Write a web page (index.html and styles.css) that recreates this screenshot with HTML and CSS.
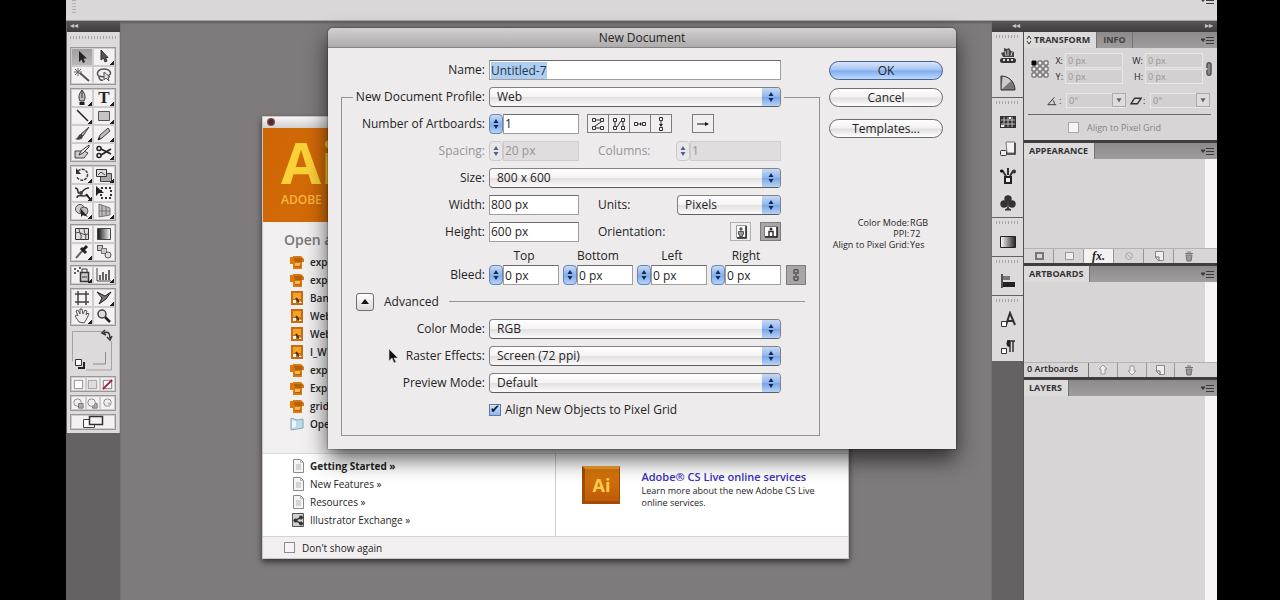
FILE: index.html
```html
<!DOCTYPE html>
<html lang="en">
<head>
<meta charset="utf-8">
<title>New Document</title>
<link rel="stylesheet" href="styles.css">
</head>
<body>
<svg class="defs" aria-hidden="true">
  <symbol id="updown" viewBox="0 0 10 14"><path d="M5 2 7.500 6h-5zM5 12 2.500 8h5z" fill="#132a5c"/></symbol>
  <symbol id="ai-file" viewBox="0 0 14 14"><path d="M0 2h3V1h8l3 3v3h-2v7H3V9H0z" fill="#d9790f"/><path d="M4 4h8M5 6h7M5 11h6" stroke="#8f4607"/><path d="M5 8h5v3H5z" fill="#ffb64c"/></symbol>
  <symbol id="web-file" viewBox="0 0 14 14"><path d="M1 0h12v14H1z" fill="#c96c0c"/><path d="M3 2h8v6H3z" fill="#f3a22e"/><path d="M3 9h3v3H3zM9 9l3 3H9z" fill="#fff"/><path d="M6 7l3 4" stroke="#5a2c04" stroke-width="2"/></symbol>
  <symbol id="doc" viewBox="0 0 14 16"><path d="M2.500 1.500h7l3 3v10h-10z" fill="#f4f4f2" stroke="#8b8989"/><path d="M9.500 1.500v3h3M5 7h5M5 9h5M5 11h5" stroke="#b5b3b3" fill="none"/></symbol>
  <symbol id="menu" viewBox="0 0 14 9"><path d="M0 3h4L2 5.500zM5 1.500h8M5 4.500h8M5 7.500h8" stroke="#3b3939" fill="#3b3939" stroke-width="1"/></symbol>
  <symbol id="new" viewBox="0 0 14 12"><path d="M3.500 1.500h8v9h-5l-3-3z" fill="#eee" stroke="#8b8888"/><path d="M3 7h4v4" stroke="#6b6969" fill="none"/></symbol>
  <symbol id="trash" viewBox="0 0 14 12"><path d="M3 3.500h8M5 2h4M4 5h6l-1 6H5z" fill="#999" stroke="#747272"/></symbol>
</svg>

<div class="app">
  <header class="topbar"><span class="topgrip"></span><svg class="menu" viewBox="0 0 14 9"><use href="#menu"/></svg></header>

  <div class="workspace">
    <aside class="tools">
      <div class="strip">◂◂</div>
      <div class="toolbox">
        <span class="grip"></span>
        <div class="group">
          <button class="tool active" aria-label="Selection"><svg viewBox="0 0 20 16"><path d="M7 2v11l2.500-2.500L11 14l2-1-1.500-3.500H15z" fill="#222"/></svg></button>
          <button class="tool more" aria-label="Direct selection"><svg viewBox="0 0 20 16"><path d="M7 1v10l2.500-2L11 13l2-1-1.500-3.500H14z" fill="#555" stroke="#333"/></svg></button>
          <button class="tool" aria-label="Magic wand"><svg viewBox="0 0 20 16"><path d="M8 6l9 8" stroke="#555" stroke-width="2"/><path d="M6 1v8M2 5h8M3 2l6 6M9 2 3 8" stroke="#666"/></svg></button>
          <button class="tool" aria-label="Lasso"><svg viewBox="0 0 20 16"><path d="M6 10C1 7 4 2 10 2s9 5 4 7-9-1-9 1 2 4 4 3" fill="none" stroke="#555" stroke-width="1.500"/><path d="M10 5v8l2-2 3 3-1-4h2z" fill="#ddd" stroke="#555"/></svg></button>
        </div>
        <div class="group">
          <button class="tool more" aria-label="Pen"><svg viewBox="0 0 20 16"><path d="M10 0C7 4 6 7 8 11h4c2-4 1-7-2-11z" fill="#bbb" stroke="#333"/><path d="M10 1v7" stroke="#333"/><path d="M7.500 13.500h5" stroke="#222" stroke-width="3"/></svg></button>
          <button class="tool more letter" aria-label="Type">T</button>
          <button class="tool more" aria-label="Line"><svg viewBox="0 0 20 16"><path d="M5 2l11 11" stroke="#222" stroke-width="1.500"/></svg></button>
          <button class="tool more" aria-label="Rectangle"><svg viewBox="0 0 20 16"><path d="M4.500 3.500h11v9h-11z" fill="#c6c4c4" stroke="#555"/></svg></button>
          <button class="tool more" aria-label="Brush"><svg viewBox="0 0 20 16"><path d="M17 1 9 8l2 2z" fill="#aaa" stroke="#444"/><path d="M9 8c-3 0-2 4-6 5 4 2 8 0 8-3z" fill="#444"/></svg></button>
          <button class="tool more" aria-label="Pencil"><svg viewBox="0 0 20 16"><path d="M4 14l2-5 8-7 2 3-8 7z" fill="#bbb" stroke="#444"/><path d="M4 14l1-3 2 2z" fill="#222"/></svg></button>
          <button class="tool" aria-label="Blob brush"><svg viewBox="0 0 20 16"><path d="M3 7h9l4 2-4 5H3z" fill="#ccc" stroke="#444"/><path d="M17 1 9 7l-2 4 4-2 6-6z" fill="#eee" stroke="#333"/></svg></button>
          <button class="tool more" aria-label="Scissors"><svg viewBox="0 0 20 16"><path d="M7 5l10 5M7 11l10-6" stroke="#222" stroke-width="1.500"/><circle cx="5" cy="4.500" r="2" fill="none" stroke="#222" stroke-width="1.500"/><circle cx="5" cy="11.500" r="2" fill="none" stroke="#222" stroke-width="1.500"/></svg></button>
        </div>
        <div class="group">
          <button class="tool more" aria-label="Rotate"><svg viewBox="0 0 20 16"><path d="M6 4a5.500 5.500 0 1 1-1 6" fill="none" stroke="#444" stroke-width="1.500" stroke-dasharray="3 1"/><path d="M4 1v6h5z" fill="#333"/></svg></button>
          <button class="tool more" aria-label="Scale"><svg viewBox="0 0 20 16"><path d="M6.500 6.500h11v8h-11z" fill="#aaa" stroke="#444"/><path d="M2.500 2.500h10v7h-10z" fill="#ddd" stroke="#333"/><path d="M4 8l3-3 4 3" stroke="#444" fill="none"/></svg></button>
          <button class="tool more" aria-label="Width"><svg viewBox="0 0 20 16"><path d="M3 3c5 0 1 6 5 5s4-6 9-5M5 13c0-5 7 0 11-3" fill="none" stroke="#333" stroke-width="1.500"/><circle cx="9" cy="8" r="2" fill="#444"/><path d="M14 9l4 5" stroke="#222" stroke-width="2"/></svg></button>
          <button class="tool" aria-label="Free transform"><svg viewBox="0 0 20 16"><path d="M7 3h10v10H7z" fill="none" stroke="#333" stroke-width="2" stroke-dasharray="2 2"/><path d="M2 1v10l3-3h5z" fill="#222"/></svg></button>
          <button class="tool more" aria-label="Shape builder"><svg viewBox="0 0 20 16"><circle cx="8" cy="6" r="4.500" fill="#ccc" stroke="#555"/><circle cx="12" cy="8" r="4" fill="#bbb" stroke="#555"/><path d="M9 6v8l2-2 5 2z" fill="#222"/></svg></button>
          <button class="tool more" aria-label="Perspective grid"><svg viewBox="0 0 20 16"><path d="M5 1v13l11-2V5z" fill="#bbb" stroke="#777"/><path d="M8 2v11M12 4v9M5 8h11" stroke="#777"/></svg></button>
        </div>
        <div class="group">
          <button class="tool" aria-label="Mesh"><svg viewBox="0 0 20 16"><path d="M3.500 2.500h13v11h-13z" fill="#ddd" stroke="#333"/><path d="M3 8c4-5 9 4 14-1M8 2c-3 4 4 7 0 12M13 2c-3 4 3 7 0 12" stroke="#444" fill="none"/></svg></button>
          <button class="tool" aria-label="Gradient"><svg viewBox="0 0 20 16"><defs><linearGradient id="g1"><stop stop-color="#111"/><stop offset="1" stop-color="#fff"/></linearGradient></defs><path d="M3.500 2.500h13v11h-13z" fill="url(#g1)" stroke="#444"/></svg></button>
          <button class="tool more" aria-label="Eyedropper"><svg viewBox="0 0 20 16"><path d="M4 14l7-8" stroke="#666" stroke-width="2"/><path d="M9 4l5 5M11 6l4-4" stroke="#222" stroke-width="3"/></svg></button>
          <button class="tool" aria-label="Blend"><svg viewBox="0 0 20 16"><rect x="3.500" y="1.500" width="5" height="5" fill="#ccc" stroke="#555"/><rect x="7.500" y="4.500" width="5" height="5" fill="#ccc" stroke="#777"/><circle cx="14" cy="11" r="3" fill="#ddd" stroke="#555"/></svg></button>
        </div>
        <div class="group">
          <button class="tool more" aria-label="Symbol sprayer"><svg viewBox="0 0 20 16"><path d="M8.500 5.500h8v9h-8z" fill="#ccc" stroke="#333" stroke-width="1.500"/><path d="M10 5V2h5v3M10 10h5" stroke="#333" fill="none"/><path d="M2 2h2M5 4h2M7 1h2M2 6h2" stroke="#333" stroke-width="1.500"/></svg></button>
          <button class="tool more" aria-label="Graph"><svg viewBox="0 0 20 16"><path d="M3 1v13h14" stroke="#444" fill="none"/><path d="M6 13V8M9 13V5M12 13V7M15 13V3" stroke="#666" stroke-width="2"/></svg></button>
        </div>
        <div class="group">
          <button class="tool" aria-label="Artboard"><svg viewBox="0 0 20 16"><path d="M6 1v14M14 1v14M3 4h14M3 12h14" stroke="#444" stroke-width="1.500"/></svg></button>
          <button class="tool more" aria-label="Slice"><svg viewBox="0 0 20 16"><path d="M3 2l8 4 6-4-5 7-7 5 3-6z" fill="#777" stroke="#222"/></svg></button>
          <button class="tool more" aria-label="Hand"><svg viewBox="0 0 20 16"><path d="M7 14 3 8l2-1 1 1-2-5 2-1 2 4V1h2l1 5 2-4 2 1-1 4 2-2 1 1-3 6-2 3z" fill="#eee" stroke="#555"/></svg></button>
          <button class="tool" aria-label="Zoom"><svg viewBox="0 0 20 16"><circle cx="8" cy="6" r="4" fill="#ddd" stroke="#444" stroke-width="1.500"/><path d="M11 9l5 5" stroke="#222" stroke-width="2.500"/></svg></button>
        </div>
        <div class="swatches"><svg viewBox="0 0 46 44"><path d="M2.500 2.500h32M2.500 2.500v30M41.500 12v29H16" fill="none" stroke="#a5a3a3"/><path d="M35.500 23v12H23" fill="none" stroke="#8d8b8b"/><path d="M34 4c4-2 6 0 6 5M37 8l3 3 2-4M35 1l-3 3 4 2" fill="none" stroke="#333" stroke-width="1.500"/><path d="M5.500 30.500h6v6h-6z" fill="#fff" stroke="#333"/><path d="M14 33v6H8" fill="none" stroke="#222" stroke-width="2"/></svg></div>
        <div class="group three">
          <button class="tool" aria-label="Color"><svg viewBox="0 0 14 14"><path d="M2.500 2.500h9v9h-9z" fill="#fff" stroke="#888"/></svg></button>
          <button class="tool" aria-label="Gradient fill"><svg viewBox="0 0 14 14"><path d="M2.500 2.500h9v9h-9z" fill="#ddd" stroke="#999"/></svg></button>
          <button class="tool" aria-label="None"><svg viewBox="0 0 14 14"><path d="M2.500 2.500h9v9h-9z" fill="#fff" stroke="#777"/><path d="M12 2 2 12" stroke="#b01736" stroke-width="2"/></svg></button>
        </div>
        <div class="group three">
          <button class="tool" aria-label="Draw normal"><svg viewBox="0 0 14 14"><circle cx="6" cy="6" r="4" fill="#eee" stroke="#888"/><path d="M7 7h5v5H7z" fill="#aaa" stroke="#777"/></svg></button>
          <button class="tool" aria-label="Draw behind"><svg viewBox="0 0 14 14"><path d="M7 7h5v5H7z" fill="#aaa" stroke="#777"/><circle cx="6" cy="6" r="4" fill="#eee" stroke="#888"/></svg></button>
          <button class="tool" aria-label="Draw inside"><svg viewBox="0 0 14 14"><circle cx="7" cy="6" r="4" fill="#eee" stroke="#888"/><path d="M7 6h4l-2 5z" fill="#bbb"/></svg></button>
        </div>
        <div class="group one"><button class="tool" aria-label="Screen mode"><svg viewBox="0 0 24 14"><path d="M2.500 4.500h11v8h-11z" fill="#fff" stroke="#444"/><path d="M8.500 1.500h13v8h-13z" fill="#f4f2f2" stroke="#333" stroke-width="1.500"/></svg></button></div>
      </div>
    </aside>

    <main class="stage">
      <section class="welcome" aria-label="Welcome">
        <div class="welcome-bar"><span class="close-dot"></span></div>
        <div class="banner"><div class="logo-text">Ai</div><div class="brand">ADOBE</div></div>
        <div class="recent">
          <h2>Open a</h2>
          <ul>
            <li><svg viewBox="0 0 14 14"><use href="#ai-file"/></svg>exp</li>
            <li><svg viewBox="0 0 14 14"><use href="#ai-file"/></svg>exp</li>
            <li><svg viewBox="0 0 14 14"><use href="#web-file"/></svg>Ban</li>
            <li><svg viewBox="0 0 14 14"><use href="#web-file"/></svg>Web</li>
            <li><svg viewBox="0 0 14 14"><use href="#web-file"/></svg>Web</li>
            <li><svg viewBox="0 0 14 14"><use href="#web-file"/></svg>I_W</li>
            <li><svg viewBox="0 0 14 14"><use href="#ai-file"/></svg>exp</li>
            <li><svg viewBox="0 0 14 14"><use href="#ai-file"/></svg>Exp</li>
            <li><svg viewBox="0 0 14 14"><use href="#ai-file"/></svg>grid</li>
            <li><svg viewBox="0 0 14 14"><path d="M1 1l6 2 6-1v9l-6 1-6 1z" fill="#bcdbe9" stroke="#86a9bc"/><path d="M2 3l4 1v6l-4 1z" fill="#eaf6fb"/></svg>Ope</li>
          </ul>
        </div>
        <div class="links">
          <ul>
            <li><svg viewBox="0 0 14 16"><use href="#doc"/></svg><a class="strong" href="#">Getting Started »</a></li>
            <li><svg viewBox="0 0 14 16"><use href="#doc"/></svg><a href="#">New Features »</a></li>
            <li><svg viewBox="0 0 14 16"><use href="#doc"/></svg><a href="#">Resources »</a></li>
            <li><svg viewBox="0 0 14 16"><path d="M1.500 1.500h11v13h-11z" fill="#d0cece" stroke="#555"/><path d="M11 5 4 8.500l7 3.500" fill="none" stroke="#444" stroke-width="1.500"/><circle cx="10" cy="5.500" r="2" fill="#333"/><circle cx="4.500" cy="8.500" r="2" fill="#333"/><circle cx="10" cy="11.500" r="2" fill="#333"/></svg><a href="#">Illustrator Exchange »</a></li>
          </ul>
          <div class="live">
            <div class="live-icon">Ai</div>
            <div><a class="live-title" href="#">Adobe® CS Live online services</a><p>Learn more about the new Adobe CS Live<br>online services.</p></div>
          </div>
        </div>
        <label class="again"><input type="checkbox">Don't show again</label>
      </section>

      <form class="dialog" aria-labelledby="title">
        <h1 id="title">New Document</h1>
        <div class="dialog-body">
          <div class="fields">
            <div class="row name-row"><label class="lab" for="name">Name:</label><div class="ctl"><input class="full" id="name" value="Untitled-7" autofocus></div></div>
            <fieldset>
              <legend><label class="lab" for="profile">New Document Profile:</label>
                <span class="pop"><select id="profile"><option>Web</option></select><svg viewBox="0 0 10 14"><use href="#updown"/></svg></span></legend>

              <div class="row"><label class="lab" for="boards">Number of Artboards:</label>
                <div class="ctl"><span class="step"><button type="button" aria-label="Step artboards"><svg viewBox="0 0 10 14"><use href="#updown"/></svg></button><input id="boards" value="1"></span>
                  <div class="arrange">
                    <button type="button" aria-label="Grid by row"><svg viewBox="0 0 16 16"><path d="M2.500 2.500h3v3h-3zM10.500 2.500h3v3h-3zM2.500 10.500h3v3h-3zM10.500 10.500h3v3h-3zM6 4h4M11 6l-6 4M6 12h4" fill="none" stroke="#333"/></svg></button>
                    <button type="button" aria-label="Grid by column"><svg viewBox="0 0 16 16"><path d="M2.500 2.500h3v3h-3zM10.500 2.500h3v3h-3zM2.500 10.500h3v3h-3zM10.500 10.500h3v3h-3zM4 6v4M6 11l4-6M12 6v4" fill="none" stroke="#333"/></svg></button>
                    <button type="button" aria-label="Arrange by row"><svg viewBox="0 0 16 16"><path d="M2.500 6.500h3v3h-3zM10.500 6.500h3v3h-3zM6 8h3" fill="none" stroke="#333"/><path d="M8 6l2 2-2 2z" fill="#222"/></svg></button>
                    <button type="button" aria-label="Arrange by column"><svg viewBox="0 0 16 16"><path d="M6.500 1.500h3v3h-3zM6.500 11.500h3v3h-3zM8 5v4" fill="none" stroke="#333"/><path d="M6 8h4l-2 3z" fill="#222"/></svg></button>
                  </div>
                  <button class="dir" type="button" aria-label="Layout direction"><svg viewBox="0 0 16 16"><path d="M2 8h9" stroke="#111"/><path d="M10 6l4 2-4 2z" fill="#111"/></svg></button>
                </div></div>

              <div class="row off"><label class="lab" for="spacing">Spacing:</label>
                <div class="ctl"><span class="step"><button type="button" disabled aria-label="Step spacing"><svg viewBox="0 0 10 14"><use href="#updown"/></svg></button><input id="spacing" value="20 px" disabled></span>
                  <label class="sub" for="cols">Columns:</label><span class="step end"><button type="button" disabled aria-label="Step columns"><svg viewBox="0 0 10 14"><use href="#updown"/></svg></button><input id="cols" value="1" disabled></span></div></div>

              <div class="row"><label class="lab" for="size">Size:</label><span class="pop"><select id="size"><option>800 x 600</option></select><svg viewBox="0 0 10 14"><use href="#updown"/></svg></span></div>

              <div class="row"><label class="lab" for="width">Width:</label>
                <div class="ctl"><input class="short" id="width" value="800 px"><label class="sub" for="units">Units:</label>
                  <span class="pop small end"><select id="units"><option>Pixels</option></select><svg viewBox="0 0 10 14"><use href="#updown"/></svg></span></div></div>

              <div class="row"><label class="lab" for="height">Height:</label>
                <div class="ctl"><input class="short" id="height" value="600 px"><span class="sub">Orientation:</span>
                  <div class="orient end">
                    <button type="button" aria-label="Portrait"><svg viewBox="0 0 16 16"><path d="M3.500 1.500h10v12h-10z" fill="#fff" stroke="#999"/><circle cx="8" cy="5" r="1.700" fill="#555"/><path d="M5.500 7.500h5v3h-1v2h-3v-2h-1z" fill="#999" stroke="#555"/><path d="M13 2v12H4" fill="none" stroke="#222" stroke-width="1.500"/></svg></button>
                    <button class="on" type="button" aria-label="Landscape"><svg viewBox="0 0 16 16"><path d="M1.500 2.500h13v10h-13z" fill="#fff" stroke="#777"/><circle cx="8" cy="5" r="1.500" fill="#333"/><path d="M6 12V7.500h4V12" fill="none" stroke="#333" stroke-width="1.500"/><path d="M14 3v10H2" fill="none" stroke="#222" stroke-width="1.500"/></svg></button>
                  </div></div></div>

              <div class="row bleed"><span class="lab">Bleed:</span>
                <div class="ctl">
                  <div class="side"><label for="b1">Top</label><span class="step"><button type="button" aria-label="Step top"><svg viewBox="0 0 10 14"><use href="#updown"/></svg></button><input id="b1" value="0 px"></span></div>
                  <div class="side"><label for="b2">Bottom</label><span class="step"><button type="button" aria-label="Step bottom"><svg viewBox="0 0 10 14"><use href="#updown"/></svg></button><input id="b2" value="0 px"></span></div>
                  <div class="side"><label for="b3">Left</label><span class="step"><button type="button" aria-label="Step left"><svg viewBox="0 0 10 14"><use href="#updown"/></svg></button><input id="b3" value="0 px"></span></div>
                  <div class="side"><label for="b4">Right</label><span class="step"><button type="button" aria-label="Step right"><svg viewBox="0 0 10 14"><use href="#updown"/></svg></button><input id="b4" value="0 px"></span></div>
                  <button class="link" type="button" aria-label="Link bleeds"><svg viewBox="0 0 16 16"><path d="M6 7V4c0-2 4-2 4 0v3M6 9v3c0 2 4 2 4 0V9M8 5v6" fill="none" stroke="#555" stroke-width="1.500"/></svg></button>
                </div></div>

              <div class="advanced"><button type="button" aria-label="Collapse advanced"><svg viewBox="0 0 16 16"><path d="M8 5l4 5H4z" fill="#111"/></svg></button><span>Advanced</span><hr></div>

              <div class="row"><label class="lab" for="mode">Color Mode:</label><span class="pop"><select id="mode"><option>RGB</option></select><svg viewBox="0 0 10 14"><use href="#updown"/></svg></span></div>
              <div class="row"><label class="lab" for="raster">Raster Effects:</label><span class="pop"><select id="raster"><option>Screen (72 ppi)</option></select><svg viewBox="0 0 10 14"><use href="#updown"/></svg></span></div>
              <div class="row"><label class="lab" for="preview">Preview Mode:</label><span class="pop"><select id="preview"><option>Default</option></select><svg viewBox="0 0 10 14"><use href="#updown"/></svg></span></div>
              <div class="row"><span class="lab"></span><label class="align"><input type="checkbox" checked>Align New Objects to Pixel Grid</label></div>
            </fieldset>
          </div>
          <div class="actions">
            <button class="btn primary" type="button">OK</button>
            <button class="btn" type="button">Cancel</button>
            <button class="btn templates" type="button">Templates...</button>
            <dl><dt>Color Mode:</dt><dd>RGB</dd><dt>PPI:</dt><dd>72</dd><dt>Align to Pixel Grid:</dt><dd>Yes</dd></dl>
          </div>
        </div>
      </form>
      <svg class="cursor" viewBox="0 0 10 16"><path d="M1 1v12l3-3 2 5 2-1-2-4h4z" fill="#111" stroke="#ddd" stroke-width=".6"/></svg>
    </main>

    <aside class="side-area">
      <div class="dock">
        <div class="strip right">◂◂</div>
        <div class="dock-group"><span class="grip"></span>
          <button aria-label="Color"><svg viewBox="0 0 18 18"><path d="M4 10 2 6l3-1V1l3 1 2-1 2 3 3 1v5z" fill="#444"/><path d="M6 4l1 5M9 3v6M13 5l-1 4" stroke="#ccc"/><rect x="1" y="11" width="16" height="5" rx="2.500" fill="#333"/><path d="M4 13h2M8 13h2M12 13h2" stroke="#ddd" stroke-width="2"/></svg></button>
          <button aria-label="Color guide"><svg viewBox="0 0 18 18"><path d="M2 16V2c8 0 14 6 14 14z" fill="#777"/><path d="M2 16 4 2c3 0 6 2 8 5z" fill="#ccc"/><path d="M2 16V2c8 0 14 6 14 14z" fill="none" stroke="#333"/></svg></button></div>
        <div class="dock-group"><span class="grip"></span>
          <button aria-label="Swatches"><svg viewBox="0 0 18 18"><path d="M1 3h16v12H1z" fill="#333"/><path d="M2 7h14M2 11h14M5 4v10M9 4v10M13 4v10" stroke="#bbb"/><path d="M10 4h2v2h-2zM2 12h3v2H2z" fill="#eee"/></svg></button>
          <button aria-label="Graphic styles"><svg viewBox="0 0 18 18"><path d="M7 2h9v11H8z" fill="#f4f2f2" stroke="#777"/><path d="M16 3v11h-8" fill="none" stroke="#333" stroke-width="1.500"/><rect x="1.500" y="10.500" width="6" height="5" rx="1" fill="#eee" stroke="#333"/></svg></button>
          <button aria-label="Brushes"><svg viewBox="0 0 18 18"><path d="M5 9h8v8H5z" fill="#222"/><path d="M7 11h4v4H7z" fill="#eee"/><path d="M7 9 3 3M9 8V1M11 9l3-5" stroke="#333" stroke-width="2"/><circle cx="2.500" cy="4" r="1.500"/><circle cx="15" cy="4.500" r="2" fill="#333"/></svg></button>
          <button aria-label="Symbols"><svg viewBox="0 0 18 18"><circle cx="9" cy="5" r="3.700" fill="#333"/><circle cx="5" cy="10" r="3.700" fill="#333"/><circle cx="13" cy="10" r="3.700" fill="#333"/><path d="M9 7v7l3 2H6l3-2z" fill="#333" stroke="#333"/></svg></button></div>
        <div class="dock-group"><span class="grip"></span>
          <button aria-label="Gradient"><svg viewBox="0 0 18 18"><defs><linearGradient id="g2"><stop stop-color="#fff"/><stop offset="1" stop-color="#222"/></linearGradient></defs><path d="M1.500 3.500h15v11h-15z" fill="url(#g2)" stroke="#222"/></svg></button></div>
        <div class="dock-group"><span class="grip"></span>
          <button aria-label="Align"><svg viewBox="0 0 18 18"><path d="M3 2v14" stroke="#222" stroke-width="1.500"/><path d="M4 4h7v4H4z" fill="#777"/><path d="M4 10h12v5H4z" fill="#222"/></svg></button></div>
        <div class="dock-group last"><span class="grip"></span>
          <button aria-label="Character styles"><svg viewBox="0 0 18 18"><path d="M7 14 11 2l5 12M8 10h6" fill="none" stroke="#333" stroke-width="2"/><path d="M2.500 10.500h5v5h-5z" fill="#fff" stroke="#333"/></svg></button>
          <button aria-label="Paragraph styles"><svg viewBox="0 0 18 18"><path d="M11 3v11M14 3v11M8 3h8" stroke="#333" stroke-width="1.500"/><path d="M11 2a3.500 3.500 0 0 0 0 7z" fill="#222"/><path d="M2.500 10.500h5v5h-5z" fill="#fff" stroke="#333"/></svg></button></div>
      </div>

      <div class="panels">
        <div class="strip right">▸▸</div>
        <section class="panel">
          <div class="tabs"><button class="tab current"><svg class="diamond" viewBox="0 0 6 10"><path d="M1 4l2-3 2 3M1 6l2 3 2-3" fill="none" stroke="#333"/></svg>TRANSFORM</button><button class="tab">INFO</button><svg class="menu" viewBox="0 0 14 9"><use href="#menu"/></svg></div>
          <div class="transform">
            <svg class="ref" viewBox="0 0 18 18"><path d="M3 3h12v12H3zM9 3v12M3 9h12" fill="none" stroke="#777"/><path d="M7 1h4v4H7zM13 1h4v4h-4zM1 7h4v4H1zM7 7h4v4H7zM13 7h4v4h-4zM1 13h4v4H1zM7 13h4v4H7zM13 13h4v4h-4z" fill="#eee" stroke="#555"/><path d="M1 1h4v4H1z" stroke="#111"/></svg>
            <label for="tx">X:</label><input id="tx" value="0 px" disabled>
            <label for="tw">W:</label><input id="tw" value="0 px" disabled>
            <svg class="chain" viewBox="0 0 8 16"><path d="M2 7V4c0-3 4-3 4 0v8c0 3-4 3-4 0V9" fill="#888" stroke="#555" stroke-width="1.500"/></svg>
            <label for="ty">Y:</label><input id="ty" value="0 px" disabled>
            <label for="th">H:</label><input id="th" value="0 px" disabled>
          </div>
          <div class="angles">
            <label for="ta" aria-label="Rotate"><svg viewBox="0 0 14 10"><path d="M9 1 2 9h9M7 4c2 1 2 3 2 5" fill="none" stroke="#333"/></svg>:</label><span class="drop"><select id="ta" disabled><option>0°</option></select><svg viewBox="0 0 14 14"><path d="M4 5h6l-3 5z" fill="#666"/></svg></span>
            <label for="ts" aria-label="Shear"><svg viewBox="0 0 14 10"><path d="M5 2h7L8 8H1z" fill="none" stroke="#333" stroke-width="1.500"/></svg>:</label><span class="drop"><select id="ts" disabled><option>0°</option></select><svg viewBox="0 0 14 14"><path d="M4 5h6l-3 5z" fill="#666"/></svg></span>
          </div>
          <label class="grid-align"><input type="checkbox" disabled>Align to Pixel Grid</label>
        </section>
        <section class="panel">
          <div class="tabs"><button class="tab current">APPEARANCE</button><svg class="menu" viewBox="0 0 14 9"><use href="#menu"/></svg></div>
          <div class="list"></div>
          <div class="foot">
            <button aria-label="Add stroke"><svg viewBox="0 0 14 12"><path d="M4 3h7v6H4z" fill="none" stroke="#777" stroke-width="2"/></svg></button>
            <button aria-label="Add fill"><svg viewBox="0 0 14 12"><path d="M3.500 2.500h8v7h-8z" fill="#eee" stroke="#999"/></svg></button>
            <button class="fx" aria-label="Add effect">fx.</button>
            <button aria-label="Clear"><svg viewBox="0 0 14 12"><circle cx="7" cy="6" r="3.500" fill="none" stroke="#aaa"/><path d="M5 4l4 4" stroke="#aaa"/></svg></button>
            <button aria-label="Duplicate"><svg viewBox="0 0 14 12"><use href="#new"/></svg></button>
            <button aria-label="Delete"><svg viewBox="0 0 14 12"><use href="#trash"/></svg></button>
          </div>
        </section>
        <section class="panel">
          <div class="tabs"><button class="tab current">ARTBOARDS</button><svg class="menu" viewBox="0 0 14 9"><use href="#menu"/></svg></div>
          <div class="list short-list"></div>
          <div class="foot">
            <span class="count">0 Artboards</span>
            <button aria-label="Move up"><svg viewBox="0 0 14 12"><path d="M7 1l4 4H9v5H5V5H3z" fill="#eee" stroke="#999"/></svg></button>
            <button aria-label="Move down"><svg viewBox="0 0 14 12"><path d="M7 11 3 7h2V2h4v5h2z" fill="#eee" stroke="#999"/></svg></button>
            <button aria-label="New artboard"><svg viewBox="0 0 14 12"><use href="#new"/></svg></button>
            <button aria-label="Delete artboard"><svg viewBox="0 0 14 12"><use href="#trash"/></svg></button>
          </div>
        </section>
        <section class="panel grow">
          <div class="tabs"><button class="tab current">LAYERS</button><svg class="menu" viewBox="0 0 14 9"><use href="#menu"/></svg></div>
          <div class="list"></div>
        </section>
      </div>
    </aside>
  </div>
</div>
<script>document.getElementById("name").select();</script>
</body>
</html>
```

FILE: styles.css
```css
* { box-sizing: border-box; }
body { margin: 0; background: #000; color: #262425; font: 500 11px/14px "Open Sans", "Noto Sans", sans-serif; }
button, input, select { font: inherit; color: inherit; margin: 0; padding: 0; }
button { display: flex; align-items: center; justify-content: center; border: 0; background: none; }
ul, dl, dd, p, h1, h2 { margin: 0; padding: 0; }
li { list-style: none; }
a { color: inherit; text-decoration: none; }
svg { display: block; flex: none; }
.defs { position: absolute; width: 0; height: 0; }

.app { display: flex; flex-direction: column; min-height: 100vh; margin: 0 63px 0 66px; background: #7f7b7d; overflow: hidden; }
.topbar { display: flex; justify-content: space-between; height: 21px; padding: 0 2px 0 6px; background: #dad7d8; border-bottom: 1px solid #a9a6a7; }
.topgrip { width: 4px; height: 14px; background: repeating-linear-gradient(#b3b0b1 0 1px, #dad7d8 1px 3px); }
.menu { width: 14px; height: 9px; }
.topbar .menu { margin-top: -4px; }
.workspace { display: flex; flex: 1; }
.strip { height: 11px; padding-left: 3px; background: linear-gradient(#575556, #3f3d3e); color: #c9c7c8; font: 8px/10px "DejaVu Sans", sans-serif; }
.strip.right { padding: 0 4px; text-align: right; }
.grip { display: block; height: 3px; background: repeating-linear-gradient(90deg, #a8a5a6 0 1px, #dcdadb 1px 3px); }

.tools { flex: none; width: 54px; padding-left: 1px; background: #656263; }
.toolbox { display: flex; flex-direction: column; gap: 3px; padding: 4px 3px 3px; background: #dcdadb; border-right: 1px solid #bbb8b9; }
.toolbox .grip { margin-bottom: 5px; }
.group { display: grid; grid-template-columns: 1fr 1fr; border: 1px solid #9a9798; background: #f3f1f2; }
.group.three { grid-template-columns: 1fr 1fr 1fr; }
.group.one { grid-template-columns: 1fr; }
.tool { position: relative; height: 18px; box-shadow: 0 0 0 1px #cfcccd inset; }
.tool svg { width: 20px; height: 16px; }
.three .tool, .one .tool { height: 14px; }
.three .tool svg { width: 13px; height: 13px; }
.one .tool svg { width: 24px; height: 14px; }
.tool.active { background: linear-gradient(#a19e9f, #bbb8b9); }
.tool.more::after { content: ""; position: absolute; right: 1px; bottom: 1px; width: 4px; height: 4px; background: linear-gradient(135deg, transparent 50%, #222 50%); }
.tool.letter { font: bold 17px/18px "Liberation Serif", serif; }
.swatches svg { width: 46px; height: 44px; }

.stage { position: relative; flex: 1; min-width: 0; background: #7f7b7d; box-shadow: inset 0 2px 2px #615e5f; }
.welcome { position: absolute; left: 142px; top: 95px; width: 587px; height: 443px; display: flex; flex-direction: column; background: #f1eff0; border: 1px solid #c9c6c7; box-shadow: 0 3px 6px rgba(0,0,0,.6); font-size: 10px; }
.welcome-bar { height: 11px; padding: 1px 4px; background: linear-gradient(#f7f5f6, #d2cfd0); }
.close-dot { display: block; width: 8px; height: 8px; border-radius: 50%; background: radial-gradient(#52282b 30%, #a56e71); }
.banner { height: 94px; padding: 5px 18px 0; background: linear-gradient(110deg, #cf6606, #df7c0e 60%, #b75605); color: #fbd136; }
.logo-text { font: bold 58px/58px "Open Sans", sans-serif; }
.brand { margin-top: 2px; color: #f9b53c; font: 600 12px/14px "Open Sans", sans-serif; }
.recent { flex: 1; padding: 9px 21px 0; }
.recent h2 { color: #7a7778; font: 600 14px/18px "Open Sans", sans-serif; }
.recent ul { padding: 4px 6px 0; }
.recent li { display: flex; align-items: center; gap: 6px; height: 18px; font-weight: 600; }
.recent svg { width: 14px; height: 14px; }
.links { display: flex; height: 84px; background: #fff; border-top: 1px solid #dcdadb; border-bottom: 1px solid #d5d2d3; }
.links ul { width: 50%; padding: 3px 28px; border-right: 1px solid #cfcccd; }
.links li { display: flex; align-items: center; gap: 5px; height: 18px; }
.links li svg { width: 14px; height: 16px; }
.strong { font-weight: 700; }
.live { display: flex; gap: 22px; padding: 12px 26px; }
.live-icon { width: 38px; height: 38px; border: solid #a24c05; border-width: 0 1px 3px 3px; border-top: 3px solid #f4a32c; background: linear-gradient(#d9780f, #c05b07); color: #fbcf4a; font: 700 18px/33px "Open Sans", sans-serif; text-align: center; }
.live-title { display: block; margin-top: 3px; color: #3a2fc0; font-size: 11px; font-weight: 600; line-height: 16px; }
.live p { font-size: 9px; line-height: 12px; }
.again { display: flex; align-items: center; gap: 7px; height: 21px; padding-left: 21px; }
.again input, .grid-align input { appearance: none; width: 11px; height: 11px; border: 1px solid #8e8b8c; background: #f6f4f5; }
.grid-align input { border-color: #aaa7a8; }

.dialog { position: absolute; left: 208px; top: 7px; width: 628px; padding-bottom: 13px; border-radius: 5px 5px 0 0; background: #edebec; box-shadow: 0 10px 22px rgba(0,0,0,.65), 0 0 2px rgba(0,0,0,.7); font-size: 12px; }
h1 { height: 20px; border-radius: 5px 5px 0 0; border-bottom: 1px solid #858283; background: linear-gradient(#d3d0d1, #aeabac); font: 500 12px/19px "Open Sans", sans-serif; text-align: center; }
.dialog-body { display: flex; justify-content: space-between; padding: 9px 13px 0; }
.fields { width: 479px; }
.row { display: flex; align-items: center; gap: 4px; min-height: 27px; }
.lab { flex: none; width: 143px; text-align: right; white-space: nowrap; }
.name-row { min-height: 26px; margin-bottom: 4px; padding-left: 1px; }
.ctl { display: flex; align-items: center; width: 292px; }
.dialog input:not([type]) { min-width: 0; height: 20px; padding-left: 1px; border: 1px solid #a19e9f; border-top-color: #6e6b6c; background: #fff; outline: 0; }
.full { width: 100%; }
.dialog input::selection { background: #afcdf0; color: #24384f; }
.short { width: 90px; }
fieldset { min-width: 0; margin: 0; padding: 3px 0 12px; border: 1px solid #949192; }
legend { display: flex; align-items: center; gap: 4px; width: 431px; height: 20px; margin-left: 11px; padding: 0; }
legend .lab { width: 132px; }
.pop { position: relative; display: block; width: 292px; height: 20px; }
.pop select { appearance: none; width: 100%; height: 20px; padding: 0 24px 0 7px; border: 1px solid #858283; border-bottom-color: #5f5c5d; border-radius: 4px; background: linear-gradient(#fff, #f5f3f4 48%, #e2e0e1 52%, #fbf9fa); }
.pop svg { position: absolute; right: 1px; top: 1px; width: 18px; height: 18px; padding: 2px; border-radius: 0 3px 3px 0; background: linear-gradient(#c5d9f6, #8fb5ed 50%, #7aa5e4 52%, #b5d3fa); pointer-events: none; }
.pop.small { width: 104px; }
.end { margin-left: auto; }
.step { display: flex; width: 90px; }
.step button { flex: none; width: 14px; height: 20px; border: 1px solid #6686b5; border-radius: 4px; background: linear-gradient(#c9dcf7, #83ace8 55%, #b5d3fa); }
.step button svg { width: 10px; height: 14px; }
.step input { flex: 1; width: 0; }
.step.end { width: 105px; }
.sub { margin-left: 19px; }
.off { color: #979495; }
.off .step button { border-color: #bdbabb; background: #e6e4e5; opacity: .7; }
.dialog .off input:not([type]) { border-color: #cfcccd; background: #dfddde; }
.arrange { display: flex; margin-left: 8px; }
.arrange button, .dir { width: 22px; height: 19px; border: 1px solid #7f7c7d; background: #f0eeef; }
.arrange button + button { width: 21px; border-left-width: 0; }
.arrange svg, .dir svg, .orient svg, .link svg { width: 16px; height: 16px; }
.dir { margin-left: 20px; }
.orient { display: flex; gap: 9px; }
.orient button, .link { width: 21px; height: 19px; border: 1px solid #b2afb0; background: #f0eeef; }
.orient .on, .link { border-color: #7f7c7d; background: #a9a6a7; }
.bleed { align-items: flex-end; min-height: 43px; padding-bottom: 3px; }
.bleed > .lab { line-height: 20px; }
.bleed .ctl { flex: none; width: 317px; gap: 4px; align-items: flex-end; }
.side { width: 70px; text-align: center; }
.side label { display: block; height: 16px; }
.side .step { width: 70px; }
.link { margin-left: 1px; height: 20px; }
.advanced { display: flex; align-items: center; gap: 10px; height: 27px; padding: 0 14px; }
.advanced button { width: 18px; height: 18px; border: 1px solid #716e6f; border-radius: 3px; background: linear-gradient(#fff, #dbd9da); }
.advanced svg { width: 16px; height: 16px; }
.advanced hr { flex: 1; margin: 0; border: 0; border-top: 1px solid #989596; }
.align { display: flex; align-items: center; gap: 4px; }
.align input { appearance: none; width: 12px; height: 12px; border: 1px solid #5a78a8; background: linear-gradient(#d5e4fa, #8fb5ed); }
.align input::before { content: "✔"; display: block; margin: -3px 0 0; color: #14213c; font: 12px/14px "DejaVu Sans", sans-serif; }
.actions { display: flex; flex-direction: column; width: 114px; padding-top: 4px; }
.btn { height: 19px; margin-bottom: 8px; border: 1px solid #6f6c6d; border-radius: 10px; background: linear-gradient(#fff, #f3f1f2 48%, #e0dedf 52%, #fff); }
.primary { border-color: #4c5f8c; background: linear-gradient(#d8e6fb, #a3c2f3 48%, #7fabee 52%, #bddcff); }
.templates { margin-top: 4px; }
.actions dl { display: grid; grid-template-columns: auto auto; justify-content: end; column-gap: 1px; margin: 71px 15px 0 -20px; font-size: 9px; line-height: 11px; white-space: nowrap; }
.actions dt { text-align: right; }
.cursor { position: absolute; left: 268px; top: 327px; width: 10px; height: 16px; }

.side-area { display: flex; flex: none; width: 225px; background: #3f3d3e; }
.dock { width: 32px; border-right: 1px solid #555253; background: #656263; }
.dock .strip { margin-right: -1px; }
.dock-group { padding: 3px 4px 1px; border-bottom: 1px solid #656263; background: #dcdadb; }
.dock-group .grip { margin-bottom: 4px; }
.dock-group button { width: 100%; height: 27px; }
.dock-group svg { width: 18px; height: 18px; }
.panels { display: flex; flex: 1; flex-direction: column; min-width: 0; }
.panel { border-bottom: 3px solid #3f3d3e; background: #d8d5d6; font-size: 9px; line-height: 12px; }
.panel.grow { display: flex; flex: 1; flex-direction: column; border: 0; }
.tabs { display: flex; align-items: center; height: 16px; padding-right: 2px; background: linear-gradient(#8d8a8b, #a09d9e); }
.tabs .menu { margin-left: auto; }
.tab { height: 16px; padding: 0 6px; border-right: 1px solid #757273; color: #444142; font-weight: 700; }
.tab.current { padding-left: 5px; background: #dcdadb; color: #333; }
.diamond { width: 6px; height: 10px; margin: 0 2px 0 -3px; }
.transform { display: grid; grid-template-columns: 20px 10px 58px 18px 58px 6px; column-gap: 2px; align-items: center; padding: 4px 0 0 7px; }
.transform label { text-align: right; }
.ref { grid-row: span 2; width: 18px; height: 18px; }
.chain { grid-row: span 2; width: 8px; height: 16px; }
.panel input:not([type]), .panel select { width: 100%; height: 15px; padding-left: 2px; border: 1px solid #e9e7e8; background: #d3d0d1; color: #979495; opacity: 1; }
.transform > * { margin-top: 1px; }
.angles { display: grid; grid-template-columns: 16px 60px 16px 60px; column-gap: 4px; align-items: center; margin: 9px 6px 0 4px; padding: 0 0 6px 18px; border-bottom: 1px solid #6b6869; }
.angles label { display: flex; align-items: center; }
.angles label svg { width: 13px; height: 10px; }
.drop { position: relative; }
.drop svg { position: absolute; right: 0; top: 0; width: 14px; height: 14px; border: 1px solid #aeabac; background: #dedcdd; pointer-events: none; }
.panel select { display: block; appearance: none; }
.grid-align { display: flex; align-items: center; justify-content: center; gap: 8px; height: 25px; padding-right: 12px; color: #888586; }
.list { height: 89px; border-right: 12px solid #f6f4f5; background: #d8d5d6; }
.grow .list { flex: 1; }
.list.short-list { height: 80px; }
.foot { display: flex; height: 15px; padding-right: 14px; border-top: 1px solid #b5b2b3; }
.foot button { flex: 1; border-right: 1px solid #9a9798; }
.foot button:last-child { border-right: 0; }
.foot svg { width: 14px; height: 12px; }
.foot .fx { background: #f3f1f2; font: italic bold 12px/14px "Liberation Serif", serif; }
.count { width: 65px; padding-left: 3px; border-right: 1px solid #777; font-weight: 600; white-space: nowrap; }
```
